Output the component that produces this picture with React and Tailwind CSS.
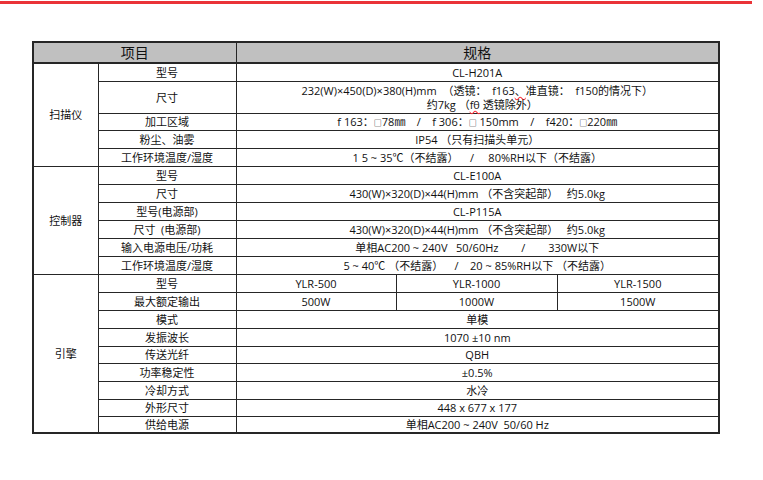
import React from 'react';

const FONT = { fontFamily: '"Open Sans", "Noto Sans CJK SC", sans-serif' };

const Sq = () => <span className="text-[8px]">□</span>;

const SCANNER = [
    { label: '型号', h: 'h-[18px]', value: 'CL-H201A' },
    { label: '尺寸', h: 'h-[32px]', value: 'size' },
    { label: '加工区域', h: 'h-[17px]', value: 'area' },
    { label: '粉尘、油雾', h: 'h-[18px]', value: 'IP54 （只有扫描头单元）' },
    { label: '工作环境温度/湿度', h: 'h-[18px]', value: '1 5 ~ 35℃（不结露）    /     80%RH以下（不结露）' },
];

const CONTROLLER = [
    { label: '型号', value: 'CL-E100A' },
    { label: '尺寸', value: '430(W)×320(D)×44(H)mm （不含突起部）   约5.0kg' },
    { label: '型号(电源部)', value: 'CL-P115A' },
    { label: '尺寸  (电源部)', value: '430(W)×320(D)×44(H)mm （不含突起部）   约5.0kg' },
    { label: '输入电源电压/功耗', value: '单相AC200 ~ 240V   50/60Hz        /        330W以下' },
    { label: '工作环境温度/湿度', value: '5 ~ 40℃ （不结露）    /    20 ~ 85%RH以下 （不结露）' },
];

const ENGINE = [
    { label: '模式', h: 'h-[18px]', value: '单模' },
    { label: '发振波长', h: 'h-[18px]', value: '1070 ±10 nm' },
    { label: '传送光纤', h: 'h-[17px]', value: 'QBH' },
    { label: '功率稳定性', h: 'h-[18px]', value: '±0.5%' },
    { label: '冷却方式', h: 'h-[18px]', value: '水冷' },
    { label: '外形尺寸', h: 'h-[17px]', value: '448 x 677 x 177' },
    { label: '供给电源', h: 'h-[17px]', value: '单相AC200 ~ 240V  50/60 Hz' },
];

const cell = 'border border-[#262626] text-center align-middle p-0 leading-[13px] whitespace-pre';
const squiggle = 'underline decoration-wavy decoration-red-500';

const App = () => {
    return (
        <div className="w-[763px] h-[480px] bg-white text-[#111] pt-[1px]" style={FONT}>
            <div className="h-[3px] w-[752px] bg-[#ea3338]" />
            <div className="mt-[37px] ml-[32px] w-[686px] shadow-[1px_0_0_#d4d4d4]">
                <table className="w-[686px] table-fixed border-collapse border-2 border-[#262626] text-[11px]">
                    <colgroup>
                        <col className="w-[65px]" />
                        <col className="w-[138px]" />
                        <col className="w-[160px]" />
                        <col className="w-[161px]" />
                        <col className="w-[162px]" />
                    </colgroup>
                    <thead>
                        <tr className="h-[21px] bg-[#c0c0c0]">
                            <th colSpan={2} className={`${cell} border-b-2 text-[14px] font-normal`}>项目</th>
                            <th colSpan={3} className={`${cell} border-b-2 text-[14px] font-normal`}>规格</th>
                        </tr>
                    </thead>
                    <tbody>
                        {SCANNER.map((row, i) => (
                            <tr key={'s' + i} className={row.h}>
                                {i === 0 && <td rowSpan={SCANNER.length} className={cell}>扫描仪</td>}
                                <td className={cell}>{row.label}</td>
                                <td colSpan={3} className={cell}>
                                    {row.value === 'size' && (
                                        <>
                                            <div className="leading-[13px]">232(W)×450(D)×380(H)mm  （透镜：  f163<span className={squiggle}>、</span>准直镜：  f150的情况下）</div>
                                            <div className="leading-[13px] mt-[1px]"><span className="ml-[10px]">约7kg （</span><span className={squiggle}>fθ</span> 透镜除外）</div>
                                        </>
                                    )}
                                    {row.value === 'area' && (
                                        <span>f 163：<Sq />78㎜    /    f 306：<Sq /> 150mm    /    f420：<Sq />220㎜</span>
                                    )}
                                    {row.value !== 'size' && row.value !== 'area' && row.value}
                                </td>
                            </tr>
                        ))}
                        {CONTROLLER.map((row, i) => (
                            <tr key={'c' + i} className="h-[18px]">
                                {i === 0 && <td rowSpan={CONTROLLER.length} className={cell}>控制器</td>}
                                <td className={cell}>{row.label}</td>
                                <td colSpan={3} className={cell}>{row.value}</td>
                            </tr>
                        ))}
                        <tr className="h-[18px]">
                            <td rowSpan={ENGINE.length + 2} className={cell}>引擎</td>
                            <td className={cell}>型号</td>
                            <td className={cell}>YLR-500</td>
                            <td className={cell}>YLR-1000</td>
                            <td className={cell}>YLR-1500</td>
                        </tr>
                        <tr className="h-[18px]">
                            <td className={cell}>最大额定输出</td>
                            <td className={cell}>500W</td>
                            <td className={cell}>1000W</td>
                            <td className={cell}>1500W</td>
                        </tr>
                        {ENGINE.map((row, i) => (
                            <tr key={'e' + i} className={row.h}>
                                <td className={cell}>{row.label}</td>
                                <td colSpan={3} className={cell}>{row.value}</td>
                            </tr>
                        ))}
                    </tbody>
                </table>
            </div>
        </div>
    );
};

export default App;
